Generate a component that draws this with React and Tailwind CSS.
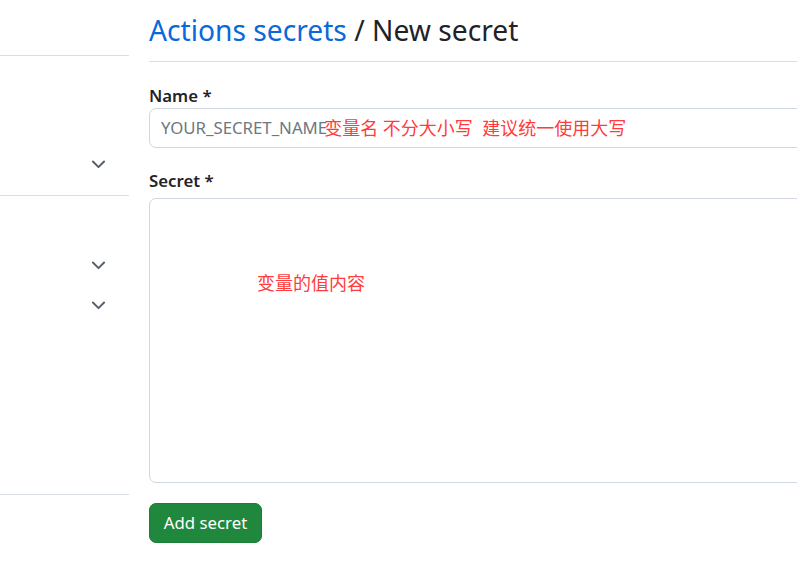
import React from 'react'

const font = { fontFamily: '"Noto Sans", "Noto Sans CJK SC", sans-serif' }

const Chevron = () => (
  <svg width="21" height="21" viewBox="0 0 16 16" fill="#57606a">
    <path d="M12.78 5.22a.749.749 0 0 1 0 1.06l-4.25 4.25a.749.749 0 0 1-1.06 0L3.22 6.28a.749.749 0 1 1 1.06-1.06L8 8.939l3.72-3.719a.749.749 0 0 1 1.06 0Z" />
  </svg>
)

const Sidebar = () => (
  <aside className="w-[129px] shrink-0">
    <div className="h-[56px] border-b border-[#d8dee4]" />
    <div className="h-[140px] border-b border-[#d8dee4] flex flex-col items-end pr-[20px] pt-[98px]">
      <Chevron />
    </div>
    <div className="h-[299px] border-b border-[#d8dee4] flex flex-col items-end pr-[20px] pt-[59px] gap-[19px]">
      <Chevron />
      <Chevron />
    </div>
  </aside>
)

export default function App() {
  return (
    <div className="w-[797px] h-[574px] overflow-hidden bg-white flex text-[#1f2328]" style={font}>
      <Sidebar />
      <main className="w-[700px] shrink-0 ml-[20px]">
        <div className="h-[62px] border-b border-[#d8dee4] flex items-center">
          <h2 className="text-[28.2px] leading-none font-normal">
            <a className="text-[#0969da]">Actions secrets</a>
            <span> / New secret</span>
          </h2>
        </div>

        <form className="pt-[24px]">
          <label className="block text-[16.8px] font-semibold leading-[20px] mb-[2px]">Name *</label>
          <div className="h-[40px] border border-[#d0d7de] rounded-[7px] flex items-center px-[11px] text-[16.8px] whitespace-pre">
            <span className="text-[#6e7781]">YOUR_SECRET_NAME</span>
            <span className="text-[#ff3b3b] text-[18px] -ml-[3px]">变量名 不分大小写  建议统一使用大写</span>
          </div>

          <label className="block text-[16.8px] font-semibold leading-[20px] mt-[23px] mb-[7px]">Secret *</label>
          <div className="h-[285px] border border-[#d0d7de] rounded-[7px] pl-[107px] pt-[71px]">
            <span className="text-[#ff3b3b] text-[18px]">变量的值内容</span>
          </div>

          <button
            type="button"
            className="mt-[20px] h-[40px] w-[113px] rounded-[7px] bg-[#1f883d] border border-[#1a7f37] text-white text-[16.8px] font-normal"
          >
            Add secret
          </button>
        </form>
      </main>
    </div>
  )
}
